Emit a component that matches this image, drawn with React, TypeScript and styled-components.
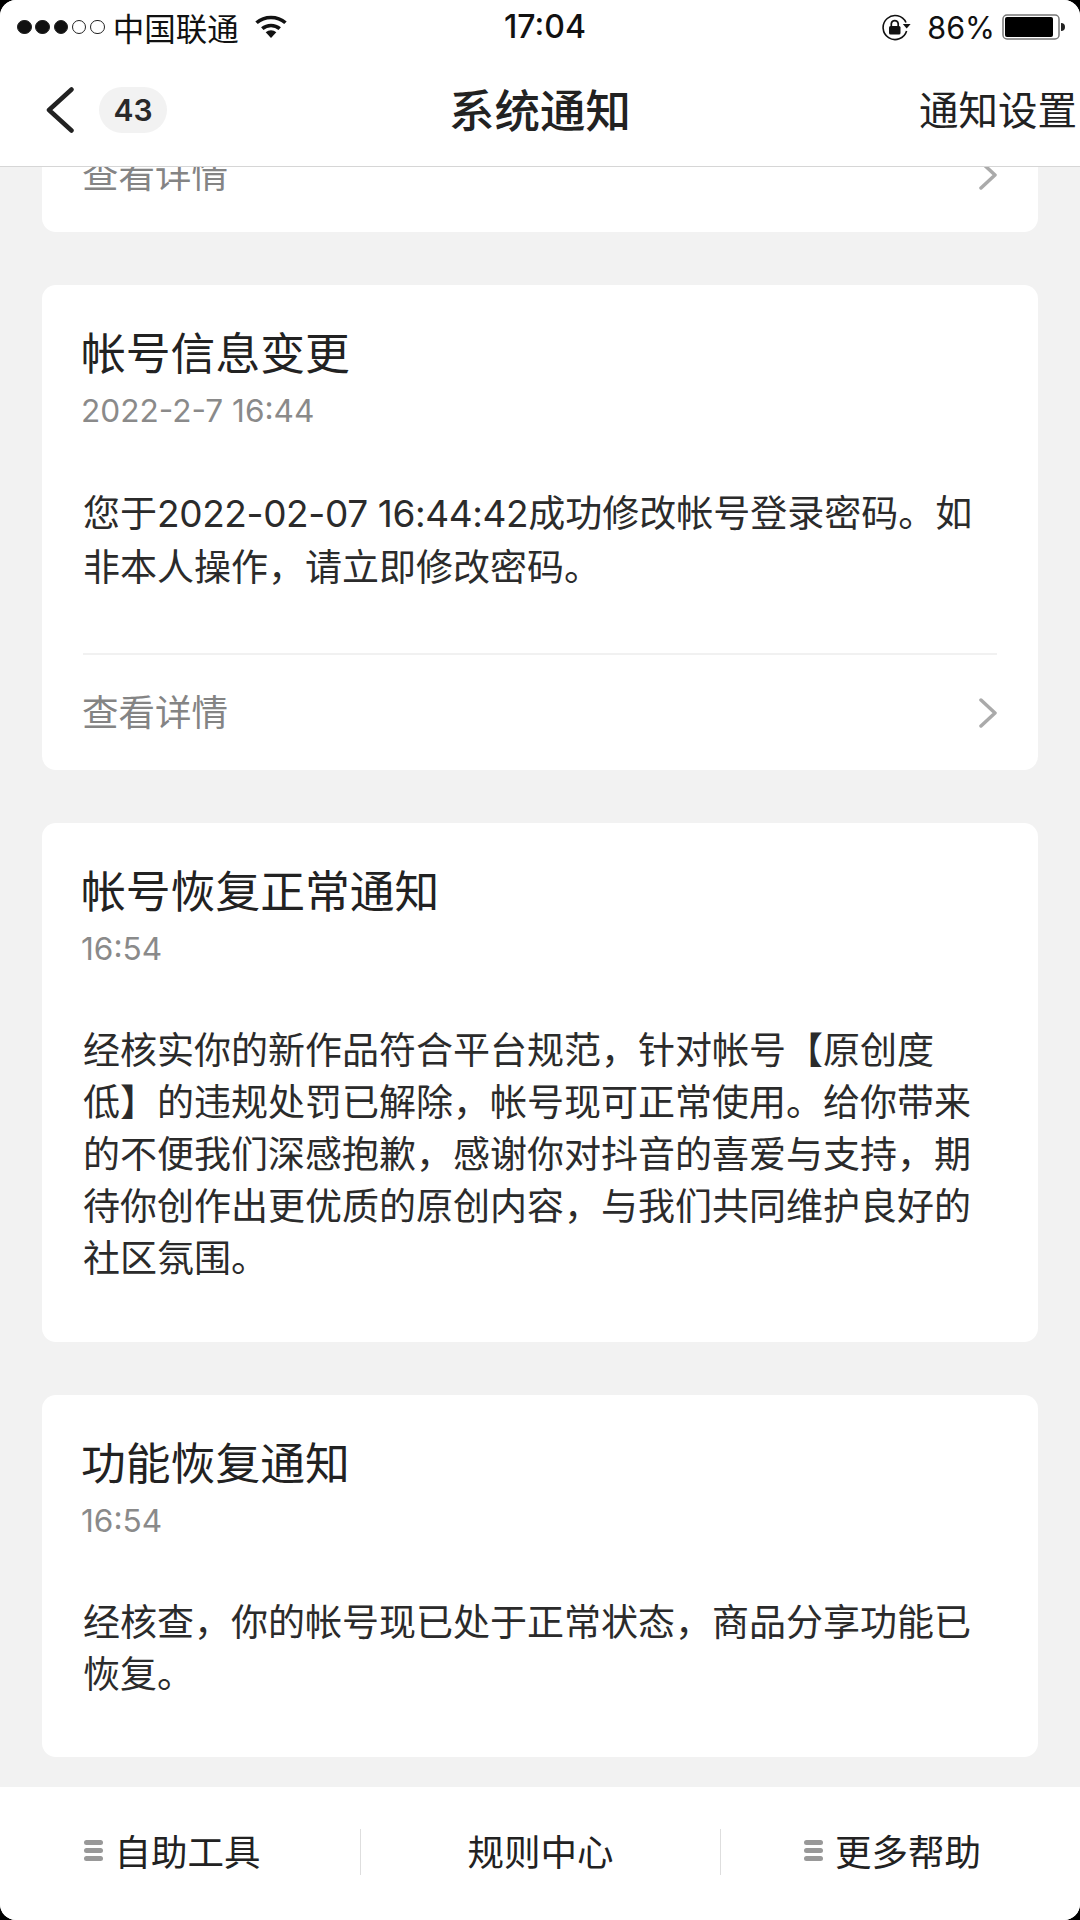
import * as React from 'react'
import styled, { createGlobalStyle } from 'styled-components';

const GlobalStyle = createGlobalStyle`
	html, body {
		margin: 0;
		padding: 0;
		background: #000;
	}
	* {
		box-sizing: border-box;
	}
`

const Screen = styled.div`
	width: 1080px;
	height: 1920px;
	display: flex;
	flex-direction: column;
	overflow: hidden;
	border-radius: 16px;
	background: #f2f2f2;
	font-family: "Noto Sans CJK SC", "Noto Sans", sans-serif;
	color: #222;
`

const TopArea = styled.header`
	height: 167px;
	flex: none;
	background: #fff;
	border-bottom: 1px solid #d6d6d6;
`

const StatusBar = styled.div`
	height: 54px;
	padding: 0 15px 0 17px;
	display: grid;
	grid-template-columns: 1fr auto 1fr;
	align-items: center;
	color: #111;
`

const StatusLeft = styled.div`
	display: flex;
	align-items: center;
`

const Signal = styled.div`
	display: flex;
	gap: 3.8px;
	margin-right: 8px;
`

const Dot = styled.span<{ $on?: boolean }>`
	width: 14.5px;
	height: 14.5px;
	border-radius: 50%;
	border: 1px solid #222;
	background: ${p => (p.$on ? '#111' : 'transparent')};
`

const Carrier = styled.span`
	font-size: 31.5px;
	line-height: 40px;
	margin-right: 15px;
`

const Clock = styled.span`
	margin: 0 0 2px 8px;
	font-family: "Inter", "Liberation Sans", sans-serif;
	font-weight: 500;
	font-size: 32px;
`

const StatusRight = styled.div`
	display: flex;
	justify-content: flex-end;
	align-items: center;
`

const Percent = styled.span`
	font-family: "Inter", "Liberation Sans", sans-serif;
	font-size: 30.5px;
	margin: 0 7px 0 16px;
`

const NavBar = styled.div`
	height: 112px;
	display: grid;
	grid-template-columns: 1fr auto 1fr;
	align-items: center;
	padding: 0 3px;
`

const NavLeft = styled.div`
	display: flex;
	align-items: center;
	gap: 25px;
	padding-left: 43px;
`

const Badge = styled.span`
	width: 68px;
	height: 46px;
	border-radius: 23px;
	background: #f2f2f2;
	display: flex;
	align-items: center;
	justify-content: center;
	font-family: "Inter", "Liberation Sans", sans-serif;
	font-weight: 600;
	font-size: 30px;
	color: #2a2a2a;
`

const NavTitle = styled.h1`
	margin: 0 0 4px;
	font-size: 45.5px;
	line-height: 60px;
	font-weight: 500;
	color: #222;
`

const NavAction = styled.span`
	justify-self: end;
	margin-bottom: 4px;
	font-size: 39.5px;
	line-height: 56px;
	color: #222;
`

const List = styled.main`
	flex: 1;
	min-height: 0;
	overflow: hidden;
`

const Stack = styled.div`
	margin-top: -50px;
	padding: 0 42px;
	display: flex;
	flex-direction: column;
	gap: 53px;
`

const Card = styled.article`
	background: #fff;
	border-radius: 14px;
	padding: 0 41px;
`

const CardMain = styled.div`
	padding-top: 36px;
`

const CardTitle = styled.h2`
	margin: 0 0 0 -2px;
	font-size: 44.8px;
	line-height: 60px;
	font-weight: 400;
	color: #222;
`

const CardTime = styled.div`
	margin: 10px 0 0 -2px;
	font-family: "Inter", "Liberation Sans", sans-serif;
	font-size: 31.6px;
	line-height: 40px;
	color: #8a8a8a;
`

const CardBody = styled.p<{ $lineHeight: number; $end: number }>`
	width: 900px;
	margin: 53px 0 ${p => p.$end}px;
	font-size: 37px;
	line-height: ${p => p.$lineHeight}px;
	color: #2b2b2b;
`

const Digits = styled.span`
	font-family: "Inter", "Liberation Sans", sans-serif;
	line-height: 0;
	letter-spacing: -0.38px;
`

const Divider = styled.hr`
	margin: 0;
	border: 0;
	height: 2px;
	background: #f1f1f1;
`

const DetailRow = styled.div`
	height: 115px;
	display: flex;
	align-items: center;
	justify-content: space-between;
	font-size: 36.5px;
	color: #848484;
`

const DetailLabel = styled.span`
	margin: 0 0 4px -1px;
`

const BottomBar = styled.footer`
	height: 133px;
	flex: none;
	background: #fff;
	display: grid;
	grid-template-columns: repeat(3, 1fr);
`

const BottomItem = styled.div<{ $divided?: boolean; $menu?: boolean }>`
	height: 46px;
	margin-top: 42px;
	padding: 0 ${p => (p.$menu ? '16px' : '0')} 4px 0;
	display: flex;
	align-items: center;
	justify-content: center;
	gap: 12px;
	font-size: 36.5px;
	color: #222;
	border-left: ${p => (p.$divided ? '1px solid #dedede' : '0')};
`

const MenuGlyph = styled.span`
	width: 19px;
	display: flex;
	flex-direction: column;
	gap: 3px;
`

const MenuBar = styled.i`
	display: block;
	height: 5px;
	border-radius: 2.5px;
	background: #999;
`

const Chevron = () => (
	<svg width="20" height="32" viewBox="0 0 20 32" fill="none">
		<path d="M4 3 L18 16 L4 29" stroke="#aaa" strokeWidth="3.5" strokeLinecap="round" strokeLinejoin="round" />
	</svg>
)

const Menu = () => (
	<MenuGlyph>
		<MenuBar />
		<MenuBar />
		<MenuBar />
	</MenuGlyph>
)

const Detail = () => (
	<DetailRow>
		<DetailLabel>查看详情</DetailLabel>
		<Chevron />
	</DetailRow>
)

const App = () => {
	return (
		<Screen>
			<GlobalStyle />
			<TopArea>
				<StatusBar>
					<StatusLeft>
						<Signal>
							<Dot $on />
							<Dot $on />
							<Dot $on />
							<Dot />
							<Dot />
						</Signal>
						<Carrier>中国联通</Carrier>
						<svg width="34" height="24" viewBox="0 0 32 24" preserveAspectRatio="none">
							<path d="M16 23 L11 17.2 A7.6 7.6 0 0 1 21 17.2 Z" fill="#111" />
							<path d="M7.8 13.6 A12.4 12.4 0 0 1 24.2 13.6" fill="none" stroke="#111" strokeWidth="3.4" />
							<path d="M2.4 7.8 A20 20 0 0 1 29.6 7.8" fill="none" stroke="#111" strokeWidth="3.4" />
						</svg>
					</StatusLeft>
					<Clock>17:04</Clock>
					<StatusRight>
						<svg width="30" height="27" viewBox="0 0 30 27" fill="none">
							<path d="M25.6 17 A12 12 0 1 1 25 8.5" stroke="#111" strokeWidth="1.6" />
							<path d="M21.8 10 L29.6 10 L25.7 14.6 Z" fill="#111" />
							<rect x="8" y="12" width="11.5" height="8.5" rx="1.5" fill="#111" />
							<path d="M10.3 12 V9.6 A3.5 3.5 0 0 1 17.2 9.6 V12" stroke="#111" strokeWidth="1.7" />
						</svg>
						<Percent>86%</Percent>
						<svg width="63" height="26" viewBox="0 0 63 26">
							<rect x="1" y="1" width="56" height="24" rx="4" fill="#fff" stroke="#777" strokeWidth="1.5" />
							<rect x="3" y="3" width="48" height="20" rx="2" fill="#000" />
							<path d="M59 9 A4 4 0 0 1 59 17 Z" fill="#222" />
						</svg>
					</StatusRight>
				</StatusBar>
				<NavBar>
					<NavLeft>
						<svg width="28" height="46" viewBox="0 0 28 46" fill="none">
							<path d="M25.5 2.5 L3 23 L25.5 43.5" stroke="#222" strokeWidth="4.5" strokeLinecap="round" strokeLinejoin="round" />
						</svg>
						<Badge>43</Badge>
					</NavLeft>
					<NavTitle>系统通知</NavTitle>
					<NavAction>通知设置</NavAction>
				</NavBar>
			</TopArea>
			<List>
				<Stack>
					<Card>
						<Detail />
					</Card>
					<Card>
						<CardMain>
							<CardTitle>帐号信息变更</CardTitle>
							<CardTime>2022-2-7 16:44</CardTime>
							<CardBody $lineHeight={54} $end={61}>
								您于<Digits>2022-02-07 16:44:42</Digits>成功修改帐号登录密码。如非本人操作，请立即修改密码。
							</CardBody>
						</CardMain>
						<Divider />
						<Detail />
					</Card>
					<Card>
						<CardMain>
							<CardTitle>帐号恢复正常通知</CardTitle>
							<CardTime>16:54</CardTime>
							<CardBody $lineHeight={52} $end={60}>
								经核实你的新作品符合平台规范，针对帐号【原创度低】的违规处罚已解除，帐号现可正常使用。给你带来的不便我们深感抱歉，感谢你对抖音的喜爱与支持，期待你创作出更优质的原创内容，与我们共同维护良好的社区氛围。
							</CardBody>
						</CardMain>
					</Card>
					<Card>
						<CardMain>
							<CardTitle>功能恢复通知</CardTitle>
							<CardTime>16:54</CardTime>
							<CardBody $lineHeight={52} $end={59}>
								经核查，你的帐号现已处于正常状态，商品分享功能已恢复。
							</CardBody>
						</CardMain>
					</Card>
				</Stack>
			</List>
			<BottomBar>
				<BottomItem $menu>
					<Menu />
					<span>自助工具</span>
				</BottomItem>
				<BottomItem $divided>
					<span>规则中心</span>
				</BottomItem>
				<BottomItem $divided $menu>
					<Menu />
					<span>更多帮助</span>
				</BottomItem>
			</BottomBar>
		</Screen>
	)
}

export default App;
